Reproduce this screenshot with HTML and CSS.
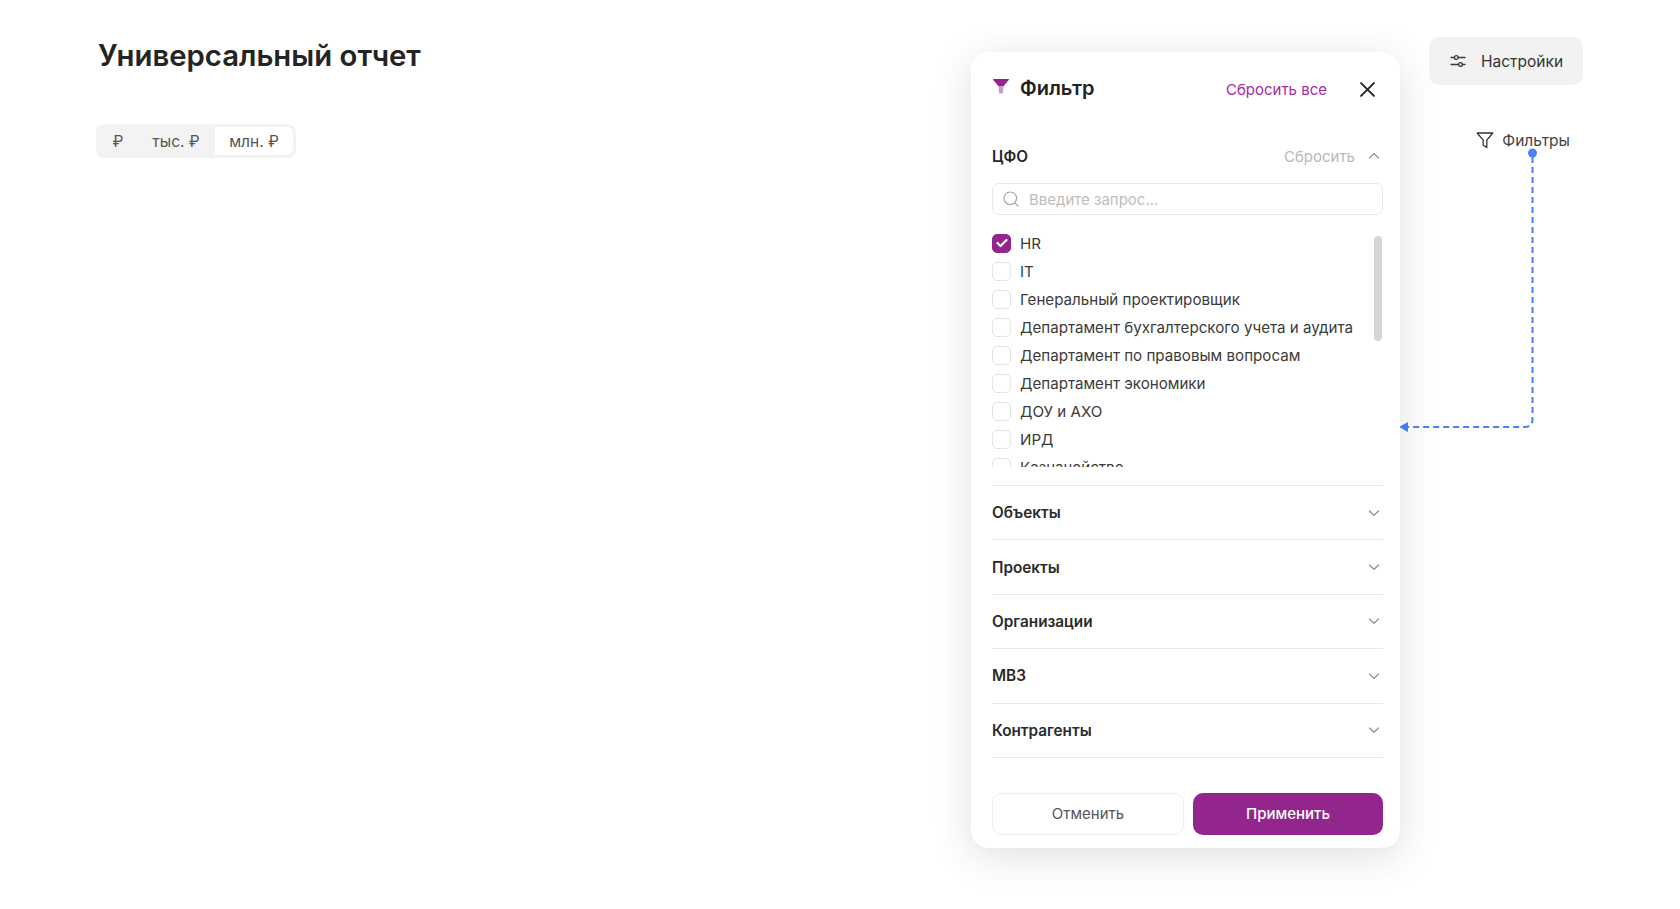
FILE: index.html
```html
<!DOCTYPE html>
<html lang="ru">
<head>
<meta charset="utf-8">
<title>Универсальный отчет</title>
<link rel="stylesheet" href="styles.css">
</head>
<body>
<div class="page">
  <main class="report">
    <h1 class="title">Универсальный отчет</h1>
    <div class="segment">
      <span class="seg-item seg-first">₽</span>
      <span class="seg-item seg-second">тыс. ₽</span>
      <span class="seg-item seg-active">млн. ₽</span>
    </div>
  </main>
  <aside class="tools">
    <button class="settings">
      <svg class="settings-icon" viewBox="0 0 16 16" fill="none" stroke="#3a3a3a" stroke-width="1.300" stroke-linecap="round"><path d="M1 4.500h3.400M8.200 4.500H15M1 11.500h7.600M12.400 11.500H15"/><circle cx="6.300" cy="4.500" r="1.900"/><circle cx="10.500" cy="11.500" r="1.900"/></svg>
      Настройки
    </button>
    <div class="filters-link">
      <svg class="filters-icon" viewBox="0 0 18 18" fill="none" stroke="#333" stroke-width="1.300" stroke-linejoin="round"><path d="M1.200 2h15.600l-6 7.200v7.200l-3.600-2.200V9.200z"/></svg>
      Фильтры
    </div>
  </aside>

  <svg class="connector" viewBox="0 0 140 290" fill="none">
    <circle cx="133.500" cy="5" r="4.500" fill="#4d7ff7"/>
    <path d="M133.500 9V271q0 8-8 8H8" stroke="#4d7ff7" stroke-width="2" stroke-dasharray="6 4"/>
    <path d="M0 279l9-5v10z" fill="#4d7ff7"/>
  </svg>

  <section class="panel">
    <header class="panel-head">
      <svg class="funnel" viewBox="0 0 16 15"><path d="M0.500 0h15a.500.500 0 0 1 .400.800L10.700 7H5.300L.100.800A.500.500 0 0 1 .500 0z" fill="#93268c"/><path d="M5.300 7h5.400L9.800 14.500H6.200z" fill="#cf9acb"/></svg>
      <span class="panel-title">Фильтр</span>
      <a class="reset-all">Сбросить все</a>
      <svg class="close" viewBox="0 0 14 14" fill="none" stroke="#222" stroke-width="1.800" stroke-linecap="round"><path d="M1 1l12 12M13 1L1 13"/></svg>
    </header>

    <div class="group-head">
      <span class="group-name">ЦФО</span>
      <span class="group-reset">Сбросить</span>
      <svg class="chev" viewBox="0 0 12 8" fill="none" stroke="#8f8f8f" stroke-width="1.200" stroke-linecap="round" stroke-linejoin="round"><path d="M1.500 6L6 1.700 10.500 6"/></svg>
    </div>

    <div class="search">
      <svg class="search-icon" viewBox="0 0 16 16" fill="none" stroke="#a8a8a8" stroke-width="1.200" stroke-linecap="round"><circle cx="7.300" cy="7.300" r="6.300"/><path d="M12 12l3 3"/></svg>
      <span>Введите запрос...</span>
    </div>

    <div class="list-wrap">
      <ul class="list">
        <li class="row"><span class="box box-on"><svg viewBox="0 0 12 10" fill="none" stroke="#fff" stroke-width="2.200" stroke-linecap="round" stroke-linejoin="round"><path d="M1.500 5l3 3 6-6"/></svg></span>HR</li>
        <li class="row"><span class="box"></span>IT</li>
        <li class="row"><span class="box"></span>Генеральный проектировщик</li>
        <li class="row"><span class="box"></span>Департамент бухгалтерского учета и аудита</li>
        <li class="row"><span class="box"></span>Департамент по правовым вопросам</li>
        <li class="row"><span class="box"></span>Департамент экономики</li>
        <li class="row"><span class="box"></span>ДОУ и АХО</li>
        <li class="row"><span class="box"></span>ИРД</li>
        <li class="row"><span class="box"></span>Казначейство</li>
      </ul>
      <span class="scrollbar"></span>
    </div>

    <div class="sections">
      <div class="section"><span>Объекты</span><svg class="chev" viewBox="0 0 12 8" fill="none" stroke="#8f8f8f" stroke-width="1.200" stroke-linecap="round" stroke-linejoin="round"><path d="M1.500 2L6 6.300 10.500 2"/></svg></div>
      <div class="section"><span>Проекты</span><svg class="chev" viewBox="0 0 12 8" fill="none" stroke="#8f8f8f" stroke-width="1.200" stroke-linecap="round" stroke-linejoin="round"><path d="M1.500 2L6 6.300 10.500 2"/></svg></div>
      <div class="section"><span>Организации</span><svg class="chev" viewBox="0 0 12 8" fill="none" stroke="#8f8f8f" stroke-width="1.200" stroke-linecap="round" stroke-linejoin="round"><path d="M1.500 2L6 6.300 10.500 2"/></svg></div>
      <div class="section"><span>МВЗ</span><svg class="chev" viewBox="0 0 12 8" fill="none" stroke="#8f8f8f" stroke-width="1.200" stroke-linecap="round" stroke-linejoin="round"><path d="M1.500 2L6 6.300 10.500 2"/></svg></div>
      <div class="section"><span>Контрагенты</span><svg class="chev" viewBox="0 0 12 8" fill="none" stroke="#8f8f8f" stroke-width="1.200" stroke-linecap="round" stroke-linejoin="round"><path d="M1.500 2L6 6.300 10.500 2"/></svg></div>
    </div>

    <footer class="actions">
      <button class="btn btn-cancel">Отменить</button>
      <button class="btn btn-apply">Применить</button>
    </footer>
  </section>
</div>
</body>
</html>
```
FILE: styles.css
```css
* { box-sizing: border-box; }
html, body { margin: 0; padding: 0; background: #fff; }
body { font-family: Inter, "Noto Sans", sans-serif; color: #232323; overflow: hidden; }
.page { position: relative; width: 1680px; height: 909px; display: flex; justify-content: space-between; padding: 37px 97px 0 98px; }

.title { margin: 0; font-size: 29.300px; line-height: 38px; font-weight: 600; color: #242424; }
.report { display: flex; flex-direction: column; align-items: flex-start; gap: 49px; }
.segment { display: flex; height: 34px; margin-left: -2px; padding: 3px; background: #f3f3f3; border-radius: 8px; font-size: 15.500px; color: #555; }
.seg-item { display: flex; align-items: center; justify-content: center; height: 28px; }
.seg-first { width: 38px; }
.seg-second { width: 78px; }
.seg-active { width: 78px; background: #fff; border-radius: 0 6px 6px 0; }

.tools { display: flex; flex-direction: column; align-items: flex-end; }
.settings { display: flex; align-items: center; gap: 15px; width: 154px; height: 48px; padding: 0 0 0 21px; background: #f2f2f2; border: 0; border-radius: 10px; font: 400 15.500px Inter, sans-serif; color: #333; }
.settings-icon { width: 16px; height: 16px; }
.filters-link { display: flex; align-items: center; gap: 8px; margin: 40px 13px 0 0; height: 30px; font-size: 15.500px; color: #444; }
.filters-icon { width: 18px; height: 18px; }

.connector { position: absolute; left: 1399px; top: 148px; width: 140px; height: 290px; }

.panel { position: absolute; left: 971px; top: 52px; width: 429px; height: 796px; padding: 0 17px 0 21px; background: #fff; border-radius: 18px; box-shadow: 0 8px 38px rgba(40, 50, 70, .15); display: flex; flex-direction: column; }
.panel-head { display: flex; align-items: center; height: 72px; }
.funnel { width: 16px; height: 15px; margin: -4px 11px 0 1px; }
.panel-title { font-size: 20px; font-weight: 600; color: #222; margin-top: -1px; }
.reset-all { margin-left: auto; font-size: 15px; color: #a62ba2; margin-top: 3px; }
.close { width: 15px; height: 15px; margin: 3px 8px 0 33px; }

.group-head { display: flex; align-items: center; height: 24px; margin-top: 20px; }
.group-name { font-size: 15.300px; font-weight: 600; color: #262626; }
.group-reset { margin-left: auto; font-size: 15px; color: #b9b9b9; }
.chev { width: 12px; height: 8px; margin-right: 3px; }
.group-reset + .chev { margin-left: 13px; }

.search { display: flex; align-items: center; gap: 10px; height: 32px; margin-top: 15px; padding: 0 10px; border: 1px solid #e8e8e8; border-radius: 7px; font-size: 15px; color: #bdbdbd; }
.search-icon { width: 16px; height: 16px; }

.list-wrap { position: relative; height: 238px; margin-top: 14px; overflow: hidden; }
.list { list-style: none; margin: 0; padding: 0; }
.row { display: flex; align-items: center; gap: 9px; height: 28px; font-size: 15.150px; color: #3b3b3b; white-space: nowrap; }
.box { display: flex; align-items: center; justify-content: center; width: 19px; height: 19px; border: 1px solid #e3e3e3; border-radius: 5px; flex: none; }
.box-on { background: #93268c; border-color: #93268c; }
.box-on svg { width: 12px; height: 10px; }
.scrollbar { position: absolute; right: 1px; top: 7px; width: 8px; height: 105px; background: #d6d6d6; border-radius: 4px; }

.sections { margin-top: 18px; border-top: 1px solid #e8e8e8; }
.section { display: flex; align-items: center; justify-content: space-between; height: 54.400px; border-bottom: 1px solid #e8e8e8; font-size: 15.300px; font-weight: 600; color: #2a2a2a; }

.actions { display: flex; gap: 9px; margin-top: 35px; }
.btn { height: 42px; border-radius: 10px; font: 500 15px Inter, sans-serif; }
.btn-cancel { width: 192px; background: #fff; border: 1px solid #ececec; color: #555; font-weight: 400; }
.btn-apply { width: 190px; background: #93268c; border: 0; color: #fff; }
```
